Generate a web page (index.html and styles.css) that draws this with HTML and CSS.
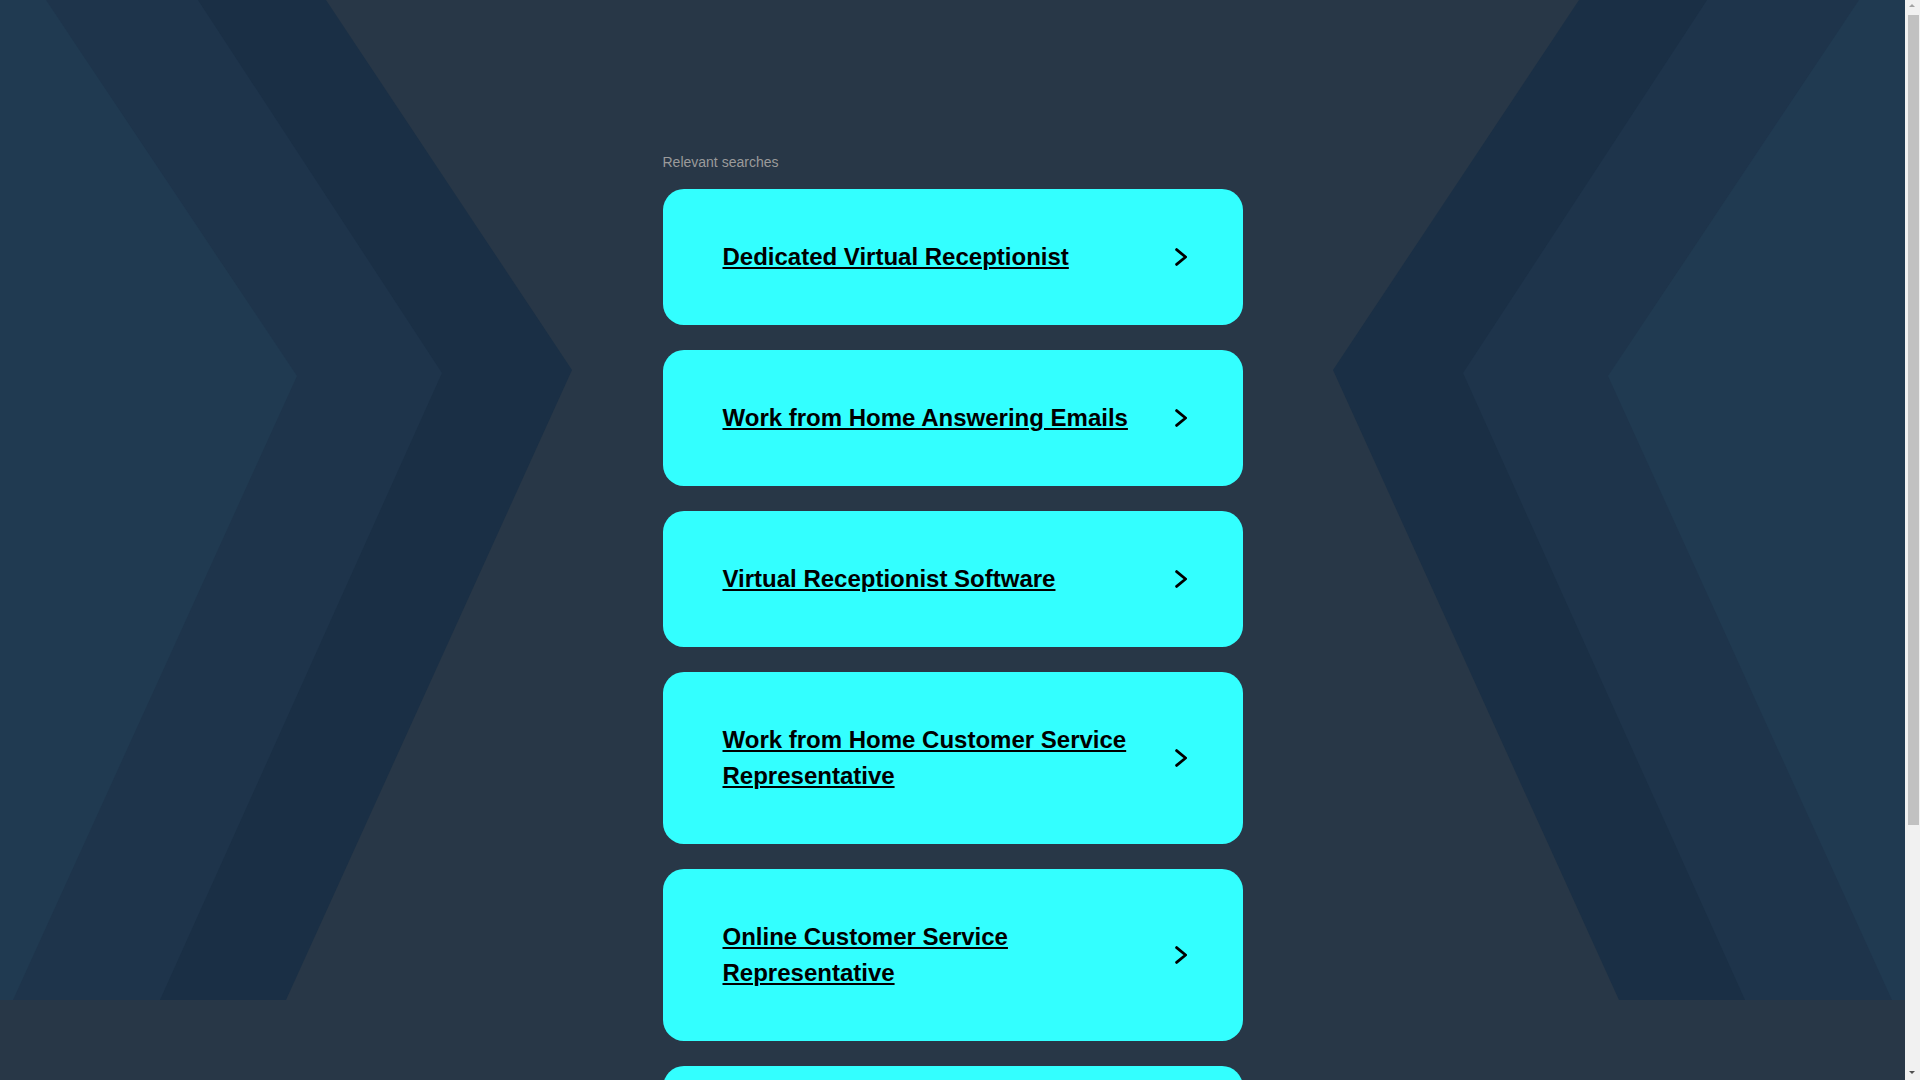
FILE: index.html
```html
<!DOCTYPE html>
<html lang="en">
<head>
<meta charset="utf-8">
<title>Relevant searches</title>
<link rel="stylesheet" href="styles.css">
</head>
<body>
<div class="page">
  <svg class="backdrop" viewBox="0 0 1905 1000" preserveAspectRatio="none" aria-hidden="true">
    <g>
      <polygon class="c-outer" points="0,0 326,0 572,370 286,1000 0,1000"/>
      <polygon class="c-middle" points="0,0 198,0 442,373 160,1000 0,1000"/>
      <polygon class="c-inner" points="0,0 46,0 297,376 13,1000 0,1000"/>
    </g>
    <g transform="translate(1905,0) scale(-1,1)">
      <polygon class="c-outer" points="0,0 326,0 572,370 286,1000 0,1000"/>
      <polygon class="c-middle" points="0,0 198,0 442,373 160,1000 0,1000"/>
      <polygon class="c-inner" points="0,0 46,0 297,376 13,1000 0,1000"/>
    </g>
  </svg>

  <main class="main">
    <div class="label">Relevant searches</div>
    <ul class="list">
      <li><a class="card" href="#"><span class="card-text">Dedicated Virtual Receptionist</span><svg class="chev" viewBox="0 0 12 18"><polyline points="1.6,1.6 10.6,9 1.6,16.4"/></svg></a></li>
      <li><a class="card" href="#"><span class="card-text">Work from Home Answering Emails</span><svg class="chev" viewBox="0 0 12 18"><polyline points="1.6,1.6 10.6,9 1.6,16.4"/></svg></a></li>
      <li><a class="card" href="#"><span class="card-text">Virtual Receptionist Software</span><svg class="chev" viewBox="0 0 12 18"><polyline points="1.6,1.6 10.6,9 1.6,16.4"/></svg></a></li>
      <li><a class="card" href="#"><span class="card-text">Work from Home Customer Service Representative</span><svg class="chev" viewBox="0 0 12 18"><polyline points="1.6,1.6 10.6,9 1.6,16.4"/></svg></a></li>
      <li><a class="card" href="#"><span class="card-text">Online Customer Service Representative</span><svg class="chev" viewBox="0 0 12 18"><polyline points="1.6,1.6 10.6,9 1.6,16.4"/></svg></a></li>
      <li><a class="card" href="#"><span class="card-text">Virtual Answering Service</span><svg class="chev" viewBox="0 0 12 18"><polyline points="1.6,1.6 10.6,9 1.6,16.4"/></svg></a></li>
    </ul>
  </main>
</div>

<div class="scrollbar" aria-hidden="true">
  <span class="sb-arrow sb-up"></span>
  <span class="sb-thumb"></span>
  <span class="sb-arrow sb-down"></span>
</div>
</body>
</html>
```

FILE: styles.css
```css
html, body {
  margin: 0;
  padding: 0;
}

body {
  background: #283747;
  font-family: "Liberation Sans", Arial, sans-serif;
}

.page {
  position: relative;
  width: calc(100% - 15px);
}

.backdrop {
  position: absolute;
  top: 0;
  left: 0;
  width: 100%;
  height: 1000px;
  display: block;
  z-index: 0;
}

.c-outer { fill: #1a2f45; }
.c-middle { fill: #1e344b; }
.c-inner { fill: #203a51; }

.main {
  position: relative;
  z-index: 1;
  width: 580px;
  margin: 0 auto;
  padding: 154px 0 173px;
}

.label {
  font-size: 14px;
  line-height: 16px;
  color: #9b9b9b;
  margin-bottom: 19px;
}

.list {
  list-style: none;
  margin: 0;
  padding: 0;
  display: flex;
  flex-direction: column;
  gap: 25px;
}

.list li {
  margin: 0;
  padding: 0;
}

.card {
  display: flex;
  align-items: center;
  gap: 20px;
  background: #33ffff;
  border-radius: 21px;
  padding: 50px 56px 50px 60px;
  color: #000;
  text-decoration: none;
}

.card-text {
  flex: 1;
  font-size: 24px;
  line-height: 36px;
  font-weight: bold;
  text-decoration: underline;
  text-decoration-thickness: 2px;
  text-underline-offset: 2px;
}

.chev {
  width: 12px;
  height: 18px;
  flex: none;
  display: block;
}

.chev polyline {
  fill: none;
  stroke: #000;
  stroke-width: 2.8;
  stroke-linecap: round;
  stroke-linejoin: round;
}

/* window scrollbar, as it appears in the capture */
.scrollbar {
  position: fixed;
  top: 0;
  right: 0;
  width: 15px;
  height: 100vh;
  background: #f1f1f1;
  display: flex;
  flex-direction: column;
  align-items: center;
  z-index: 5;
}

.sb-arrow {
  flex: none;
  width: 15px;
  height: 15px;
  position: relative;
}

.sb-arrow::before {
  content: "";
  position: absolute;
  left: 4px;
  width: 0;
  height: 0;
  border-left: 3.5px solid transparent;
  border-right: 3.5px solid transparent;
}

.sb-up::before {
  top: 4px;
  border-bottom: 3.5px solid #a3a3a3;
}

.sb-down {
  margin-top: auto;
}

.sb-down::before {
  top: 6px;
  border-top: 3.5px solid #505050;
}

.sb-thumb {
  flex: none;
  width: 11px;
  height: 810px;
  margin-left: 2px;
  background: #c1c1c1;
}
```
